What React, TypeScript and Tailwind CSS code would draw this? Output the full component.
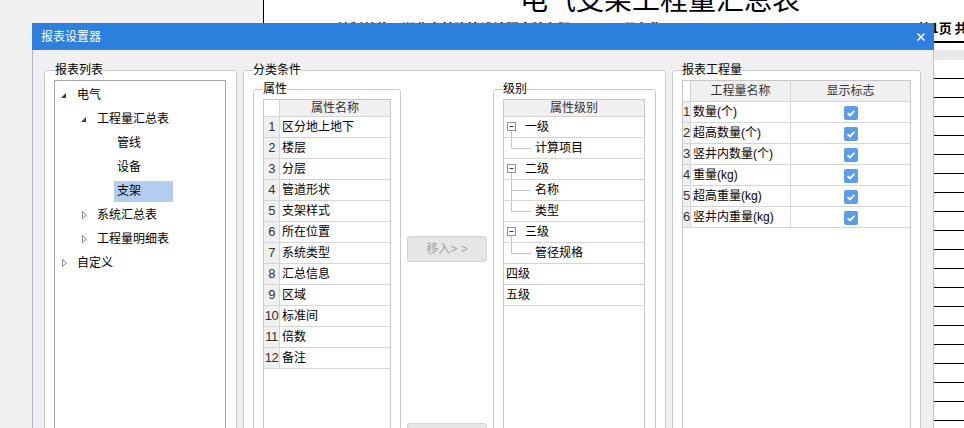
import type { ReactNode } from 'react'

const UI = "font-['Liberation_Sans','Noto_Sans_CJK_SC',sans-serif]"

const ATTRS = ['区分地上地下', '楼层', '分层', '管道形状', '支架样式', '所在位置', '系统类型', '汇总信息', '区域', '标准间', '倍数', '备注']

type LevelRow = { text: string; kind: 'parent' | 'child' | 'plain'; last?: boolean }
const LEVELS: LevelRow[] = [
  { text: '一级', kind: 'parent' },
  { text: '计算项目', kind: 'child', last: true },
  { text: '二级', kind: 'parent' },
  { text: '名称', kind: 'child' },
  { text: '类型', kind: 'child', last: true },
  { text: '三级', kind: 'parent' },
  { text: '管径规格', kind: 'child', last: true },
  { text: '四级', kind: 'plain' },
  { text: '五级', kind: 'plain' },
]

const QUANTITIES = ['数量(个)', '超高数量(个)', '竖井内数量(个)', '重量(kg)', '超高重量(kg)', '竖井内重量(kg)']

/** GroupBox: legend sits on the top border like the WPF control */
function Group({ label, className = '', children }: { label: string; className?: string; children: ReactNode }) {
  return (
    <fieldset className={`min-w-0 border border-[#c9c9c9] rounded-[3px] bg-white ${className}`}>
      <legend className="text-[12px] leading-[15px] text-black">{label}</legend>
      {children}
    </fieldset>
  )
}

function Expanded() {
  return (
    <svg width="5" height="5" viewBox="0 0 5 5">
      <path d="M5 0V5H0Z" fill="#3c3c3c" />
    </svg>
  )
}

function Collapsed() {
  return (
    <svg width="5" height="8" viewBox="0 0 5 8" className="ml-[1px]">
      <path d="M0.5 0.5L4.5 4L0.5 7.5Z" fill="none" stroke="#8c8c8c" />
    </svg>
  )
}

function TreeRow({ indent, icon, text }: { indent: number; icon?: 'open' | 'closed'; text: string }) {
  return (
    <div className="flex h-[24px] items-center" style={{ paddingLeft: indent }}>
      <span className="flex w-[16px] items-center">
        {icon === 'open' && <Expanded />}
        {icon === 'closed' && <Collapsed />}
      </span>
      <span className="text-[12px] leading-[16px]">{text}</span>
    </div>
  )
}

function Checkbox() {
  return (
    <svg width="14" height="14" viewBox="0 0 14 14">
      <rect width="14" height="14" rx="2" fill="#5b9de9" />
      <path d="M3.6 7.2L6 9.4L10.4 4.9" fill="none" stroke="#fff" strokeWidth="1.8" />
    </svg>
  )
}

function LevelCell({ row }: { row: LevelRow }) {
  if (row.kind === 'parent') {
    return (
      <div className="flex h-[20px] items-center">
        <svg width="21" height="20" viewBox="0 0 21 20" className="shrink-0">
          <rect x="3.5" y="5.5" width="8" height="8" fill="#fff" stroke="#8f8f8f" />
          <path d="M5.5 9.5H9.5" stroke="#3c3c3c" />
          <path d="M7.5 14V20" stroke="#c4c4c4" />
        </svg>
        <span>{row.text}</span>
      </div>
    )
  }
  if (row.kind === 'child') {
    return (
      <div className="flex h-[20px] items-center">
        <svg width="31" height="20" viewBox="0 0 31 20" className="shrink-0">
          <path d={row.last ? 'M7.5 0V10.5' : 'M7.5 0V20'} stroke="#c4c4c4" />
          <path d="M7.5 10.5H27" stroke="#c4c4c4" />
        </svg>
        <span>{row.text}</span>
      </div>
    )
  }
  return <div className="flex h-[20px] items-center pl-[2px]">{row.text}</div>
}

function Background() {
  return (
    <div className="flex h-full">
      <div className="w-[264px] shrink-0 border-r border-black bg-[#f0f0f0]" />
      <div className="flex-1 overflow-hidden bg-white font-['Noto_Sans_CJK_SC',sans-serif] text-black">
        <div className="mt-[-18px] pl-[256px] text-[28px] leading-[32px] whitespace-nowrap">电气支架工程量汇总表</div>
        <div className="mt-[7px] flex text-[13px] leading-[14px] font-bold whitespace-nowrap">
          <span className="w-[654px] shrink-0 pl-[73px]">编制单位：湖北省某建筑设计研究院有限公司　工程名称：</span>
          <span>第1页 共1页</span>
        </div>
        <div className="mt-[6px] h-[2px] bg-black" />
        <div className="h-[7px]" />
        <div className="h-[10px] bg-[#e8e8e8]" />
        {Array.from({ length: 20 }).map((_, i) => (
          <div key={i} className="h-[19px] border-b border-black" />
        ))}
      </div>
    </div>
  )
}

export default function App() {
  return (
    <div className={`relative h-[428px] w-[964px] overflow-hidden ${UI}`}>
      <Background />

      {/* dialog window */}
      <div className="absolute left-[32px] top-[23px] flex h-[420px] w-[902px] flex-col">
        <div className="flex h-[27px] shrink-0 items-center justify-between bg-[#2e80df] pl-[9px] pr-[9px]">
          <span className="text-[12px] leading-[16px] text-white">报表设置器</span>
          <svg width="8" height="8" viewBox="0 0 8 8">
            <path d="M0.5 0.5L7.5 7.5M7.5 0.5L0.5 7.5" stroke="#fff" strokeWidth="1.5" />
          </svg>
        </div>

        <div className="flex flex-1 gap-[6px] border-l border-r border-l-[#a9b8d0] border-r-[#c4c4c4] bg-[#f0f0f0] pl-[11px] pt-[13px] text-[12px] leading-[16px] text-black">
          {/* 报表列表 */}
          <Group label="报表列表" className="h-[400px] w-[193px] shrink-0 px-[10px] pt-[2px]">
            <div className="-ml-[1px] h-[360px] border border-[#a9a9a9] bg-white pt-[2px]">
              <TreeRow indent={6} icon="open" text="电气" />
              <TreeRow indent={26} icon="open" text="工程量汇总表" />
              <TreeRow indent={46} text="管线" />
              <TreeRow indent={46} text="设备" />
              <div className="flex h-[24px] items-center pl-[59px]">
                <div className="flex h-[21px] w-[59px] items-center bg-[#b3cdee] pl-[3px]">支架</div>
              </div>
              <TreeRow indent={26} icon="closed" text="系统汇总表" />
              <TreeRow indent={26} icon="closed" text="工程量明细表" />
              <TreeRow indent={6} icon="closed" text="自定义" />
            </div>
          </Group>

          {/* 分类条件 */}
          <Group label="分类条件" className="h-[400px] w-[423px] shrink-0 pl-[9px] pt-[4px]">
            <div className="flex">
              <Group label="属性" className="h-[380px] w-[148px] shrink-0 px-[9px] pt-[2px]">
                <div className="h-[360px] border border-[#c6c6c6] bg-white">
                  <div className="flex h-[17px] border-b border-[#d5d5d5]">
                    <div className="w-[16px] shrink-0 border-r border-[#d5d5d5]" />
                    <div className="flex-1 bg-[#f0f0f0] text-center leading-[16px] text-[#333]">属性名称</div>
                  </div>
                  {ATTRS.map((a, i) => (
                    <div key={a} className="flex h-[21px] border-b border-[#d5d5d5]">
                      <div className="w-[16px] shrink-0 border-r border-[#d5d5d5] bg-[#f0f0f0] text-center text-[13px] leading-[20px] text-[#333] tracking-[-0.5px]">
                        {i + 1}
                      </div>
                      <div className="flex-1 pl-[2px] leading-[20px]">{a}</div>
                    </div>
                  ))}
                </div>
              </Group>

              <div className="flex w-[92px] shrink-0 flex-col items-center pt-[154px]">
                <div className="flex h-[26px] w-[80px] items-center justify-center rounded-[3px] border border-[#d3d3d3] bg-[#e6e6e6] text-[#a3a3a3]">
                  移入&gt; &gt;
                </div>
                {/* second button: only its top edge is in view */}
                <div className="mt-[161px] h-[26px] w-[80px] rounded-[3px] border border-[#d3d3d3] bg-[#e6e6e6]" />
              </div>

              <Group label="级别" className="h-[380px] w-[163px] shrink-0 pl-[9px] pr-[10px] pt-[2px]">
                <div className="h-[360px] border border-[#c6c6c6] bg-white">
                  <div className="h-[17px] border-b border-[#d5d5d5] bg-[#f0f0f0] text-center leading-[16px] text-[#333]">属性级别</div>
                  {LEVELS.map(r => (
                    <div key={r.text} className="h-[21px] border-b border-[#d5d5d5]">
                      <LevelCell row={r} />
                    </div>
                  ))}
                </div>
              </Group>
            </div>
          </Group>

          {/* 报表工程量 */}
          <Group label="报表工程量" className="h-[400px] w-[249px] shrink-0 px-[9px] pt-[2px]">
            <div className="h-[360px] border border-[#c6c6c6] bg-white">
              <div className="flex h-[21px] border-b border-[#d5d5d5]">
                <div className="w-[8px] shrink-0 border-r border-[#d5d5d5]" />
                <div className="w-[100px] shrink-0 border-r border-[#d5d5d5] bg-[#f0f0f0] text-center leading-[20px] text-[#333]">工程量名称</div>
                <div className="flex-1 bg-[#f0f0f0] text-center leading-[20px] text-[#333]">显示标志</div>
              </div>
              {QUANTITIES.map((q, i) => (
                <div key={q} className="flex h-[21px] border-b border-[#d5d5d5]">
                  <div className="w-[8px] shrink-0 border-r border-[#d5d5d5] bg-[#f0f0f0] text-[13px] leading-[20px] text-[#333]">{i + 1}</div>
                  <div className="w-[100px] shrink-0 border-r border-[#d5d5d5] pl-[2px] leading-[20px]">{q}</div>
                  <div className="flex flex-1 items-center justify-center pt-[1px]">
                    <Checkbox />
                  </div>
                </div>
              ))}
            </div>
          </Group>
        </div>
      </div>
    </div>
  )
}
